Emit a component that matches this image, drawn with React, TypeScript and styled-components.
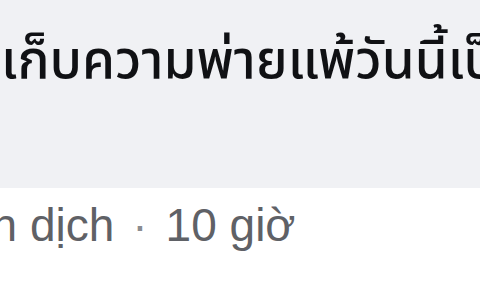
import styled, { createGlobalStyle } from "styled-components";

const GlobalStyle = createGlobalStyle`
  html, body {
    margin: 0;
    padding: 0;
    background: #ffffff;
    overflow: hidden;
  }
`;

export default function App() {
  return (
    <>
      <GlobalStyle />
      <Comment>
        <Bubble>
          <BodyText>เก็บความพ่ายแพ้วันนี้เป็นบทเรียน</BodyText>
        </Bubble>
        <Meta>
          <MetaLink>Xem bản dịch</MetaLink>
          <Dot>·</Dot>
          <Time>10 giờ</Time>
        </Meta>
      </Comment>
    </>
  );
}

const Comment = styled.div`
  width: 480px;
  height: 288px;
  overflow: hidden;
  display: flex;
  flex-direction: column;
`;

const Bubble = styled.div`
  height: 188px;
  background-color: #f0f1f4;
  padding: 28px 0 0 1px;
  box-sizing: border-box;
  overflow: hidden;
`;

const BodyText = styled.p`
  margin: 0;
  white-space: nowrap;
  color: #101114;
  font-family: "Noto Sans Thai", Tahoma, "DejaVu Sans", "Noto Sans", sans-serif;
  font-size: 53px;
  font-weight: 500;
  line-height: 68px;
`;

const Meta = styled.div`
  display: flex;
  align-items: baseline;
  margin-left: -167px;
  padding-top: 9px;
  gap: 18px;
  white-space: nowrap;
  color: #5f6166;
  font-family: "Liberation Sans", Arial, sans-serif;
  font-size: 46px;
  line-height: 56px;
`;

const MetaLink = styled.span``;

const Dot = styled.span`
  color: #8a8c90;
`;

const Time = styled.span``;
